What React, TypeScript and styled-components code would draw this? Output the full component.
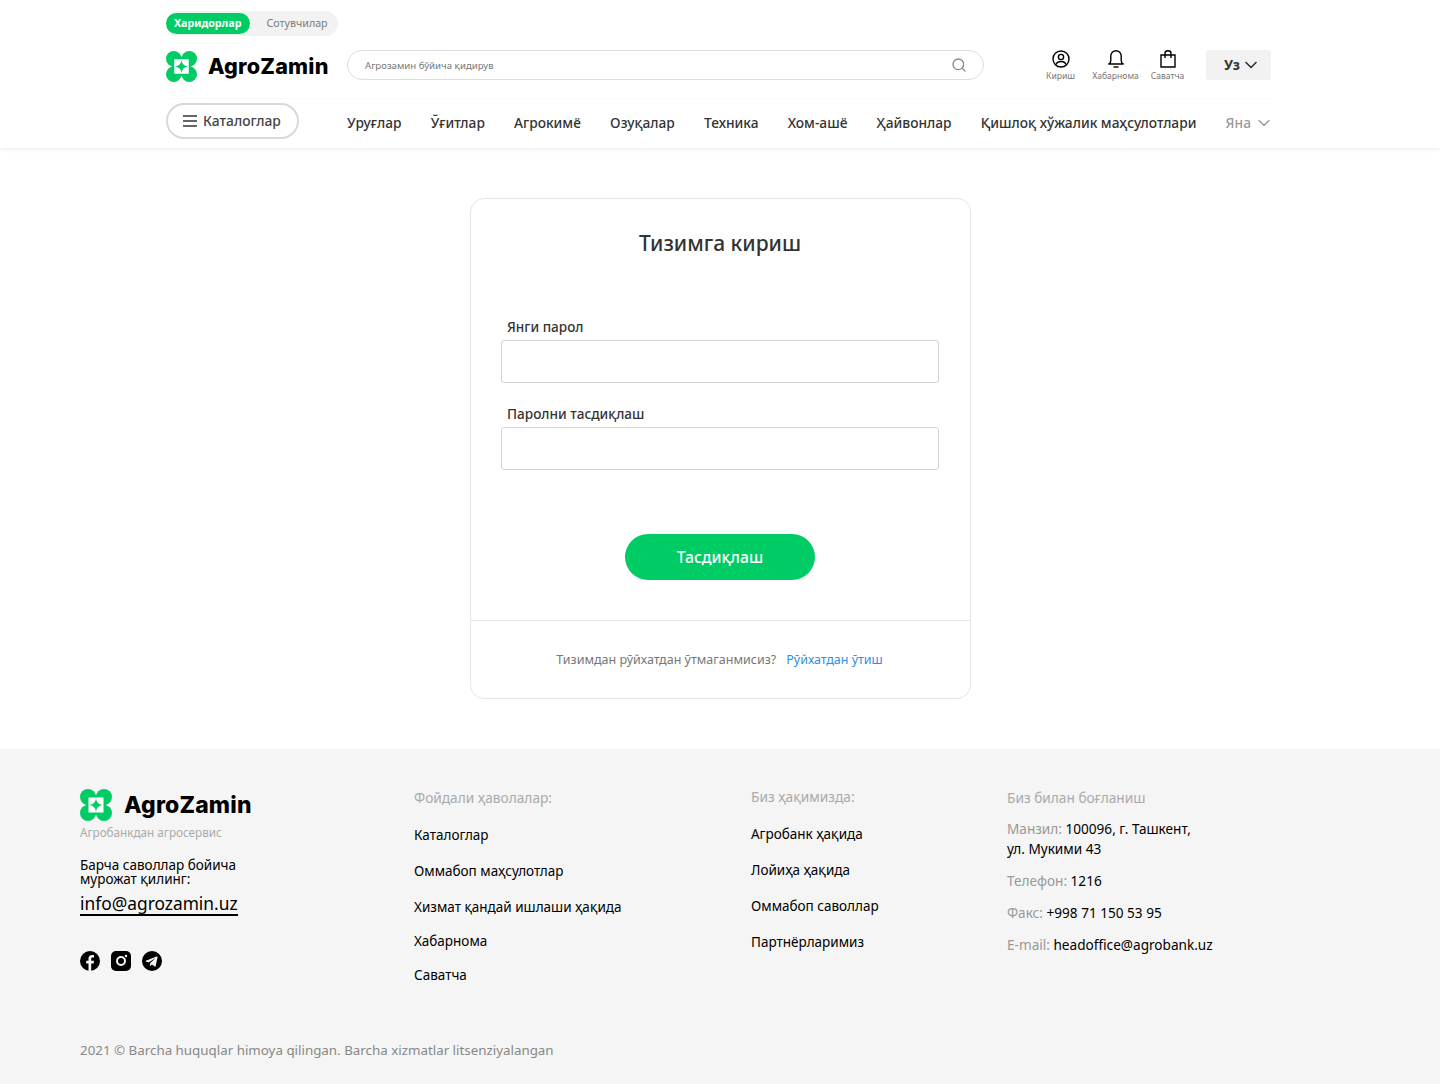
import styled, { createGlobalStyle } from 'styled-components';
import { Search, ChevronDown } from 'lucide-react';

const GlobalStyle = createGlobalStyle`
  * { box-sizing: border-box; }
  body {
    margin: 0;
    background: #fff;
    font-family: "Noto Sans", "Open Sans", sans-serif;
    color: #000;
  }
`;

const navItems = ['Уруғлар', 'Ўғитлар', 'Агрокимё', 'Озуқалар', 'Техника', 'Хом-ашё', 'Ҳайвонлар', 'Қишлоқ хўжалик маҳсулотлари'];

function Logo({ size }: { size: number }) {
  return (
    <svg width={size} height={size} viewBox="0 0 32 32">
      <circle cx="8" cy="8" r="8" fill="#00cc66" />
      <circle cx="24" cy="8" r="8" fill="#00cc66" />
      <circle cx="8" cy="24" r="8" fill="#00cc66" />
      <circle cx="24" cy="24" r="8" fill="#00cc66" />
      <rect x="6" y="6" width="20" height="20" fill="#00cc66" />
      <rect x="8.500" y="8.500" width="15" height="15" fill="#fff" />
      <path fill="#00cc66" d="M16 9.500c.6 3.900 2.600 5.900 6.500 6.500-3.900.6-5.900 2.600-6.500 6.500-.6-3.900-2.600-5.900-6.500-6.500 3.900-.6 5.900-2.600 6.500-6.500z" />
    </svg>
  );
}

function UserIcon() {
  return (
    <svg width="18" height="18" viewBox="0 0 18 18" fill="none" stroke="#000" strokeWidth="1.400">
      <circle cx="9" cy="9" r="8" />
      <circle cx="9" cy="7" r="2.600" />
      <path d="M4 14.500c.7-2 2.300-3 5-3s4.300 1 5 3" />
    </svg>
  );
}

function BellIcon() {
  return (
    <svg width="18" height="18" viewBox="0 0 18 18" fill="none" stroke="#000" strokeWidth="1.400">
      <path d="M1.800 14c1.400-.5 2-1.600 2-3.500V6a5.200 5.200 0 0 1 10.400 0v4.500c0 1.900.6 3 2 3.500z" strokeLinejoin="round" />
      <path d="M6.500 17h5" />
    </svg>
  );
}

function BagIcon() {
  return (
    <svg width="18" height="18" viewBox="0 0 18 18" fill="none" stroke="#000" strokeWidth="1.400">
      <path d="M2 5h14v12H2z" />
      <path d="M6 8V3.200C6 1.800 7 .8 9 .8s3 1 3 2.400V8" />
    </svg>
  );
}

function FacebookIcon() {
  return (
    <svg width="20" height="20" viewBox="0 0 20 20">
      <circle cx="10" cy="10" r="10" fill="#000" />
      <path fill="#f5f5f5" d="M11.200 20v-7.500h2.400l.4-2.800h-2.800V8c0-.8.300-1.400 1.500-1.400H14V4.200c-.4-.1-1.100-.2-2-.2-2.100 0-3.500 1.300-3.500 3.600v2.100H6.200v2.800h2.300V20z" />
    </svg>
  );
}

function InstagramIcon() {
  return (
    <svg width="20" height="20" viewBox="0 0 20 20">
      <rect width="20" height="20" rx="5" fill="#000" />
      <circle cx="10" cy="10" r="4" fill="none" stroke="#f5f5f5" strokeWidth="2" />
      <circle cx="15" cy="5" r="1.200" fill="#f5f5f5" />
    </svg>
  );
}

function TelegramIcon() {
  return (
    <svg width="20" height="20" viewBox="0 0 20 20">
      <circle cx="10" cy="10" r="10" fill="#000" />
      <path fill="#f5f5f5" d="M3.800 9.800l10.800-4.300c.6-.2 1.100.2.900 1l-1.800 8.500c-.1.600-.5.800-1 .5l-2.800-2.100-1.400 1.300c-.2.200-.3.300-.6.300l.2-2.800 5.100-4.600c.2-.2 0-.3-.3-.1l-6.300 4-2.700-.9c-.6-.2-.6-.6-.1-.8z" />
    </svg>
  );
}

export default function App() {
  return (
    <>
      <GlobalStyle />
      <Header>
        <HeaderInner>
          <RoleSwitch>
            <RoleButton $active>Харидорлар</RoleButton>
            <RoleButton>Сотувчилар</RoleButton>
          </RoleSwitch>
          <TopRow>
            <HeaderLogo>
              <Logo size={31} />
              <LogoText>AgroZamin</LogoText>
            </HeaderLogo>
            <SearchBox>
              <SearchHint>Агрозамин бўйича қидирув</SearchHint>
              <Search size={16} color="#8a8a8a" />
            </SearchBox>
            <Actions>
              <Action $width={29}>
                <UserIcon />
                <span>Кириш</span>
              </Action>
              <Action $width={47}>
                <BellIcon />
                <span>Хабарнома</span>
              </Action>
              <Action $width={33}>
                <BagIcon />
                <span>Саватча</span>
              </Action>
            </Actions>
            <LangButton>
              Уз <ChevronDown size={20} strokeWidth={2} />
            </LangButton>
          </TopRow>
          <NavRow>
            <CatalogButton>
              <Burger>
                <i />
                <i />
                <i />
              </Burger>
              Каталоглар
            </CatalogButton>
            <Nav>
              {navItems.map((item) => (
                <NavItem key={item}>{item}</NavItem>
              ))}
              <MoreItem>
                Яна <ChevronDown size={20} strokeWidth={1.500} />
              </MoreItem>
            </Nav>
          </NavRow>
        </HeaderInner>
      </Header>

      <Main>
        <Card>
          <CardBody>
            <CardTitle>Тизимга кириш</CardTitle>
            <Field>
              <FieldLabel>Янги парол</FieldLabel>
              <FieldInput type="password" />
            </Field>
            <Field>
              <FieldLabel>Паролни тасдиқлаш</FieldLabel>
              <FieldInput type="password" />
            </Field>
            <SubmitButton>Тасдиқлаш</SubmitButton>
          </CardBody>
          <CardFooter>
            Тизимдан рўйхатдан ўтмаганмисиз?
            <RegisterLink>Рўйхатдан ўтиш</RegisterLink>
          </CardFooter>
        </Card>
      </Main>

      <Footer>
        <FooterGrid>
          <BrandColumn>
            <LogoLink>
              <Logo size={32} />
              <FooterLogoText>AgroZamin</FooterLogoText>
            </LogoLink>
            <Tagline>Агробанкдан агросервис</Tagline>
            <AskText>Барча саволлар бойича мурожат қилинг:</AskText>
            <MailLink>info@agrozamin.uz</MailLink>
            <Socials>
              <FacebookIcon />
              <InstagramIcon />
              <TelegramIcon />
            </Socials>
          </BrandColumn>
          <LinksColumn $width={337} $top={0}>
            <ColumnTitle>Фойдали ҳаволалар:</ColumnTitle>
            <LinkItem>Каталоглар</LinkItem>
            <LinkItem>Оммабоп маҳсулотлар</LinkItem>
            <LinkItem $tight>Хизмат қандай ишлаши ҳақида</LinkItem>
            <LinkItem $tight>Хабарнома</LinkItem>
            <LinkItem $tight>Саватча</LinkItem>
          </LinksColumn>
          <LinksColumn $width={256} $top={-1}>
            <ColumnTitle>Биз ҳақимизда:</ColumnTitle>
            <LinkItem>Агробанк ҳақида</LinkItem>
            <LinkItem>Лойиҳа ҳақида</LinkItem>
            <LinkItem>Оммабоп саволлар</LinkItem>
            <LinkItem>Партнёрларимиз</LinkItem>
          </LinksColumn>
          <ContactColumn>
            <ContactTitle>Биз билан боғланиш</ContactTitle>
            <ContactRow>
              <em>Манзил:</em> 100096, г. Ташкент,
              <br />
              ул. Мукими 43
            </ContactRow>
            <ContactRow>
              <em>Телефон:</em> 1216
            </ContactRow>
            <ContactRow>
              <em>Факс:</em> +998 71 150 53 95
            </ContactRow>
            <ContactRow>
              <em>E-mail:</em> headoffice@agrobank.uz
            </ContactRow>
          </ContactColumn>
        </FooterGrid>
        <Copyright>2021 © Barcha huquqlar himoya qilingan. Barcha xizmatlar litsenziyalangan</Copyright>
      </Footer>
    </>
  );
}

const Header = styled.header`
  height: 148px;
  background: #fff;
  box-shadow: 0 1px 5px rgba(0, 0, 0, 0.09);
`;
const HeaderInner = styled.div`
  width: 1105px;
  margin-left: 166px;
  padding-top: 11px;
`;
const RoleSwitch = styled.div`
  display: flex;
  align-items: center;
  height: 25px;
  padding: 2px 0;
  background: #f2f2f2;
  border-radius: 13px;
  width: 172px;
`;
const RoleButton = styled.div<{ $active?: boolean }>`
  height: ${(p) => (p.$active ? '21px' : 'auto')};
  margin-left: ${(p) => (p.$active ? '0' : '16px')};
  padding: ${(p) => (p.$active ? '0 9px 0 8px' : '0')};
  border-radius: 11px;
  background: ${(p) => (p.$active ? '#00cc66' : 'transparent')};
  color: ${(p) => (p.$active ? '#fff' : '#7d7d7d')};
  font-size: 10.700px;
  font-weight: ${(p) => (p.$active ? 700 : 400)};
  line-height: 21px;
`;
const TopRow = styled.div`
  display: flex;
  align-items: center;
  height: 32px;
  margin-top: 13px;
`;
const LogoLink = styled.div`
  display: flex;
  align-items: center;
  gap: 10px;
`;
const HeaderLogo = styled(LogoLink)`
  gap: 11px;
  padding-top: 2px;
`;
const LogoText = styled.div`
  font-family: "Inter", sans-serif;
  font-size: 21.600px;
  font-weight: 800;
  letter-spacing: 0.2px;
  width: 139px;
  white-space: nowrap;
`;
const SearchBox = styled.div`
  display: flex;
  align-items: center;
  justify-content: space-between;
  width: 637px;
  height: 30px;
  padding: 0 16px 0 17px;
  border: 1px solid #dddde3;
  border-radius: 15px;
`;
const SearchHint = styled.span`
  font-size: 9.650px;
  color: #777;
`;
const Actions = styled.div`
  display: flex;
  align-items: flex-start;
  margin-left: 62px;
  padding-top: 2px;
  gap: 17px;
  & > div:last-child {
    margin-left: -5px;
  }
`;
const Action = styled.div<{ $width: number }>`
  display: flex;
  flex-direction: column;
  align-items: center;
  gap: 3px;
  width: ${(p) => p.$width}px;
  font-size: 8.600px;
  color: #777;
  line-height: 11px;
  white-space: nowrap;
`;
const LangButton = styled.div`
  display: flex;
  align-items: center;
  justify-content: center;
  gap: 1px;
  width: 65px;
  height: 30px;
  margin-left: auto;
  padding: 0 0 1px 8px;
  background: #f2f2f2;
  border-radius: 3px;
  font-size: 14px;
  font-weight: 700;
  color: #333;
`;
const NavRow = styled.div`
  display: flex;
  align-items: center;
  margin-top: 17px;
  padding-top: 4px;
  border-top: 1px solid #fafafa;
`;
const CatalogButton = styled.div`
  display: flex;
  align-items: center;
  gap: 6px;
  width: 133px;
  height: 36px;
  padding: 0 0 1px 15px;
  border: 2px solid #d9d9d9;
  border-radius: 18px;
  font-size: 13.800px;
  font-weight: 500;
  color: #444;
`;
const Burger = styled.span`
  display: flex;
  flex-direction: column;
  gap: 3px;
  i {
    display: block;
    width: 14px;
    height: 2px;
    background: #666;
  }
`;
const Nav = styled.nav`
  flex: 1;
  display: flex;
  justify-content: space-between;
  align-items: center;
  margin-left: 48px;
  padding-top: 2px;
`;
const NavItem = styled.span`
  font-size: 13.750px;
  font-weight: 500;
  color: #333;
  white-space: nowrap;
`;
const MoreItem = styled(NavItem)`
  display: flex;
  align-items: center;
  gap: 3px;
  color: #999;
  svg {
    margin: 2px -3px 0 0;
  }
`;
const Main = styled.main`
  display: flex;
  justify-content: center;
  padding: 50px 0 50px 1px;
`;
const Card = styled.section`
  width: 501px;
  height: 501px;
  border: 1px solid #e6e6e6;
  border-radius: 14px;
  display: flex;
  flex-direction: column;
`;
const CardBody = styled.div`
  height: 422px;
  padding: 30px 31px 0 30px;
  display: flex;
  flex-direction: column;
  border-bottom: 1px solid #e6e6e6;
`;
const CardTitle = styled.h1`
  margin: 0 0 59px;
  font-size: 21px;
  font-weight: 500;
  line-height: 29px;
  text-align: center;
  color: #333;
`;
const Field = styled.label`
  display: block;
  margin-bottom: 21px;
`;
const FieldLabel = styled.div`
  padding-left: 6px;
  margin-bottom: 3px;
  font-size: 13.600px;
  font-weight: 500;
  line-height: 20px;
  color: #333;
`;
const FieldInput = styled.input`
  display: block;
  width: 100%;
  height: 43px;
  border: 1px solid #ced4da;
  border-radius: 3px;
  background: #fff;
`;
const SubmitButton = styled.button`
  align-self: center;
  width: 190px;
  height: 46px;
  margin-top: 43px;
  border: 0;
  border-radius: 23px;
  background: #00cc66;
  color: #fff;
  font-family: inherit;
  font-size: 15.700px;
  font-weight: 500;
`;
const CardFooter = styled.div`
  flex: 1;
  display: flex;
  align-items: center;
  justify-content: center;
  gap: 10px;
  padding-right: 2px;
  font-size: 12.500px;
  color: #777;
`;
const RegisterLink = styled.span`
  color: #2e8fe8;
`;
const Footer = styled.footer`
  height: 335px;
  padding: 40px 80px 0;
  background: #f5f5f5;
`;
const FooterGrid = styled.div`
  display: flex;
  height: 252px;
`;
const BrandColumn = styled.div`
  width: 334px;
`;
const FooterLogoText = styled(LogoText)`
  width: auto;
  margin-left: 2px;
  font-size: 22.900px;
`;
const Tagline = styled.div`
  margin-top: 3px;
  font-size: 11.700px;
  color: #aaa;
  line-height: 16px;
`;
const AskText = styled.div`
  width: 180px;
  margin-top: 18px;
  font-size: 13.500px;
  line-height: 14px;
`;
const MailLink = styled.a`
  display: inline-block;
  margin-top: 6px;
  font-size: 17.350px;
  line-height: 22px;
  border-bottom: 2px solid #000;
`;
const Socials = styled.div`
  display: flex;
  gap: 11px;
  margin-top: 35px;
`;
const LinksColumn = styled.div<{ $width: number; $top: number }>`
  width: ${(p) => p.$width}px;
  margin-top: ${(p) => p.$top}px;
`;
const ColumnTitle = styled.div`
  margin: 0 0 19px;
  font-size: 13.700px;
  line-height: 18px;
  color: #aaa;
`;
const LinkItem = styled.div<{ $tight?: boolean }>`
  font-size: 13.500px;
  line-height: 18px;
  margin-bottom: ${(p) => (p.$tight ? '16px' : '18px')};
`;
const ContactColumn = styled.div`
  flex: 1;
`;
const ContactTitle = styled(ColumnTitle)`
  margin-bottom: 12px;
`;
const ContactRow = styled.div`
  margin-bottom: 12px;
  font-size: 13.600px;
  line-height: 20px;
  em {
    font-style: normal;
    color: #999;
  }
`;
const Copyright = styled.div`
  font-size: 13.350px;
  line-height: 18px;
  color: #888;
`;
